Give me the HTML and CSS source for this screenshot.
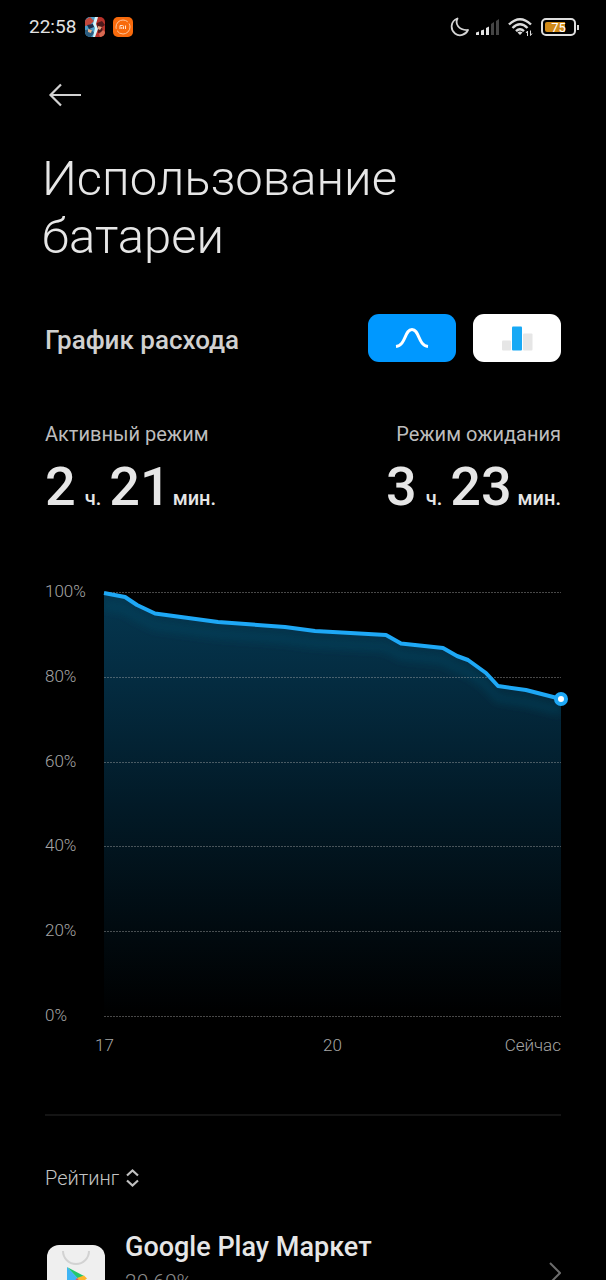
FILE: index.html
```
<!DOCTYPE html>
<html lang="ru">
<head>
	<meta charset="UTF-8">
	<meta name="viewport" content="width=device-width, initial-scale=1">
	<title>Использование батареи</title>
	<link rel="stylesheet" href="styles.css">
</head>
<body>
	<div class="screen">
		<!-- status bar -->
		<div class="status">
			<div class="status-left">
				<span class="clock">22:58</span>
				<svg width="20" height="20" viewBox="0 0 20 20">
					<defs><clipPath id="gameClip"><rect width="20" height="20" rx="5"/></clipPath></defs>
					<g clip-path="url(#gameClip)">
						<rect width="10" height="20" fill="#4c9cc8"/>
						<rect x="10" width="10" height="20" fill="#b8322a"/>
						<path d="M0 3l5-3 4 4-4 4-5 1z" fill="#c3473b"/>
						<path d="M2 8l6-1 1 3-5 2z" fill="#1c2c48"/>
						<path d="M0 13l6-1 3 4-3 4H0z" fill="#2a5c80"/>
						<path d="M3 12l4 1-1 3-3-1z" fill="#e6b48c"/>
						<path d="M12 6l5-2 3 4-3 2 1 5-5 1z" fill="#4e1a1c"/>
						<path d="M13 9l4 1-2 3-2-1z" fill="#e9a27c"/>
						<path d="M10 0h3l-2 7 2 5-3 8H8l2-9-2-4z" fill="#d8f6fb"/>
						<path d="M14 17l4-4 2 2v5h-5z" fill="#d86a52"/>
					</g>
				</svg>
				<svg class="mi" width="20" height="20" viewBox="0 0 20 20">
					<rect width="20" height="20" rx="5" fill="#f86a0c"/>
					<circle cx="10" cy="10" r="7" fill="none" stroke="#ffc49a" stroke-width="1" stroke-dasharray="18 2"/>
					<path d="M7 12V8.500h2.500q1 0 1 1V12M8.800 10v2M12.500 8.500V12" fill="none" stroke="#ffe3cf" stroke-width="1"/>
				</svg>
			</div>
			<div class="status-right">
				<svg width="20" height="20" viewBox="0 0 20 20">
					<path d="M7.500 1.500C5 6.500 8 13.500 18 13 15.500 18 9.500 20 5 16.500 0 12.500 0.500 4 7.500 1.500z" fill="none" stroke="#d4d4d4" stroke-width="1.800" stroke-linejoin="round"/>
				</svg>
				<svg class="signal" width="24" height="18" viewBox="0 0 24 18">
					<path d="M0 17v-2.500l3-1V17zM5 17v-4.500l3-1V17zM10 17v-7l3-1.500V17z" fill="#e4e4e4"/>
					<path d="M15 17V6l3-2v13zM20 17V3l3-2v16z" fill="#454545"/>
				</svg>
				<svg class="wifi" width="25" height="20" viewBox="0 0 25 20">
					<g fill="none" stroke="#dcdcdc" stroke-width="2.400">
						<path d="M1 7.500Q12 -3 23 7.500M4.500 11Q12 3.500 19.500 11M8 14.200Q12 10.200 16 14.200"/>
					</g>
					<path d="M9.500 15.500Q12 13.500 14.500 15.500L12 18z" fill="#dcdcdc"/>
					<path d="M19.500 19v-5l-1.500 2M22.500 13.500v5l1.500-2" fill="none" stroke="#dcdcdc" stroke-width="1"/>
				</svg>
				<span class="battery"><span class="battery-body"><span class="battery-text">75</span></span></span>
			</div>
		</div>

		<main class="content">
			<button class="back" type="button" aria-label="Назад">
				<svg width="34" height="24" viewBox="0 0 34 24">
					<path d="M33 12H3M13 1.500L2.500 12 13 22.500" fill="none" stroke="#d2d2d2" stroke-width="2.200"/>
				</svg>
			</button>

			<h1>Использование батареи</h1>

			<section class="mode">
				<h2>График расхода</h2>
				<div class="mode-buttons">
					<button class="mode-btn active" type="button" aria-label="Линейный график">
						<svg width="34" height="22" viewBox="0 0 34 22">
							<path d="M1 19.500C11 18.500 9.500 2.500 17 2.500S23 18.500 33 19.500" fill="none" stroke="#fff" stroke-width="3"/>
						</svg>
					</button>
					<button class="mode-btn" type="button" aria-label="Столбчатый график">
						<svg width="32" height="25" viewBox="0 0 32 25">
							<rect x="1" y="14.500" width="9" height="10" rx="1" fill="#e6e6e6"/>
							<rect x="22" y="7.500" width="9.500" height="17" rx="1" fill="#e6e6e6"/>
							<rect x="11" y="0.500" width="10" height="24" rx="1" fill="#18a9f5"/>
						</svg>
					</button>
				</div>
			</section>

			<section class="totals">
				<div>
					<p class="label">Активный режим</p>
					<p class="time"><b>2</b> <span class="hour">ч.</span> <b>21</b> <span class="minute">мин.</span></p>
				</div>
				<div class="right">
					<p class="label">Режим ожидания</p>
					<p class="time"><b>3</b> <span class="hour">ч.</span> <b>23</b> <span class="minute">мин.</span></p>
				</div>
			</section>

			<section class="chart">
				<div class="y-axis">
					<span>100%</span>
					<span>80%</span>
					<span>60%</span>
					<span>40%</span>
					<span>20%</span>
					<span>0%</span>
				</div>
				<div class="plot">
					<svg viewBox="0 0 457 425" preserveAspectRatio="none">
						<defs>
							<linearGradient id="area" x1="0" y1="0" x2="0" y2="1">
								<stop offset="0" stop-color="#053750"/>
								<stop offset="0.200" stop-color="#042c41"/>
								<stop offset="0.500" stop-color="#021a27"/>
								<stop offset="0.800" stop-color="#010a0f"/>
								<stop offset="1" stop-color="#000"/>
							</linearGradient>
							<clipPath id="areaClip">
								<path d="M0 1L21 5 33 13 51 21.500 114 30 181 35 211 39 282 43 297 51.500 339 56 353 64 364 68 382 81 394 94 422 98 457 107V425H0z"/>
							</clipPath>
							<filter id="soft" x="-10%" y="-20%" width="120%" height="140%"><feGaussianBlur stdDeviation="4"/></filter>
						</defs>
						<path d="M0 1L21 5 33 13 51 21.500 114 30 181 35 211 39 282 43 297 51.500 339 56 353 64 364 68 382 81 394 94 422 98 457 107V425H0z" fill="url(#area)"/>
						<g clip-path="url(#areaClip)">
							<path d="M0 13L21 17 33 25 51 33.500 114 42 181 47 211 51 282 55 297 63.500 339 68 353 76 364 80 382 93 394 106 422 110 457 119" fill="none" stroke="#0c4a66" stroke-opacity="0.500" stroke-width="7" filter="url(#soft)"/>
						</g>
						<g class="grid-lines">
							<path d="M0 0.500H457M0 85.500H457M0 170.500H457M0 254.500H457M0 339.500H457M0 424.500H457"/>
						</g>
						<path class="line" d="M0 1L21 5 33 13 51 21.500 114 30 181 35 211 39 282 43 297 51.500 339 56 353 64 364 68 382 81 394 94 422 98 457 107"/>
					</svg>
					<span class="dot"></span>
				</div>
				<div class="x-axis">
					<span>17</span>
					<span>20</span>
					<span>Сейчас</span>
				</div>
			</section>

			<section class="rating">
				<button class="sort" type="button">
					Рейтинг
					<svg width="13" height="18" viewBox="0 0 13 18">
						<path d="M1 6.500L6.500 1.500 12 6.500M1 11.500L6.500 16.500 12 11.500" fill="none" stroke="#c0c0c0" stroke-width="2.200"/>
					</svg>
				</button>
				<a class="app" href="#">
					<svg class="app-icon" width="58" height="58" viewBox="0 0 58 58">
						<rect width="58" height="58" rx="12" fill="#efefef"/>
						<path d="M16 6a13 13 0 0 0 26 0" fill="none" stroke="#d2d2d2" stroke-width="2"/>
						<path d="M20 22l17 9-5 4z" fill="#22c76c"/>
						<path d="M20 22l12 12.500-12 12.500z" fill="#3fb4f4"/>
						<path d="M30 33l7-2.500 3 3-6 4.500z" fill="#fdb52b"/>
						<path d="M20 47l10-14 4 5z" fill="#f0505c"/>
					</svg>
					<span class="app-text">
						<span class="app-name">Google Play Маркет</span>
						<span class="app-value">20.60%</span>
					</span>
					<svg class="chevron" width="14" height="22" viewBox="0 0 14 22">
						<path d="M3 1L13 11 3 21" fill="none" stroke="#6c6c6c" stroke-width="2"/>
					</svg>
				</a>
			</section>
		</main>
	</div>
</body>
</html>
```
FILE: styles.css
```
* {box-sizing: border-box;}
body {margin: 0; background: #000; color: #e6e6e6; font-family: Roboto, "Liberation Sans", sans-serif;}
h1, h2, p {margin: 0;}
button {border: 0; padding: 0; background: none; color: inherit; font: inherit; cursor: pointer;}
svg {display: block; flex: none;}

.screen {height: 100vh; overflow: hidden;}

/* status bar */
.status {display: flex; justify-content: space-between; align-items: center; height: 54px; padding: 0 27px 0 29px;}
.status-left, .status-right {display: flex; align-items: center;}
.clock {font-size: 19px; line-height: 24px; margin-right: 9px; color: #e2e2e2;}
.mi {margin-left: 8px;}
.signal {margin-left: 6px;}
.wifi {margin-left: 8px;}
.battery {display: flex; align-items: center; margin-left: 8px;}
.battery::after {content: ""; width: 2px; height: 5px; margin-left: 1px; background: #d8d8d8;}
.battery-body {width: 35px; height: 18px; border: 2px solid #dedede; border-radius: 5px; padding: 2px;}
.battery-text {display: block; height: 10px; border-radius: 2px; background: linear-gradient(90deg, #d08a18 75%, transparent 75%);
	font-size: 13px; line-height: 11px; text-align: center; color: #fff;}

.content {padding: 0 45px;}
.back {display: block; margin: 29px 0 0 3px;}

h1 {margin: 43px 0 0 -3px; font-size: 49px; line-height: 58px; font-weight: 300; max-width: 460px;}

.mode {display: flex; justify-content: space-between; align-items: center; margin-top: 48px;}
h2 {padding-top: 4px; font-size: 26px; line-height: 32px; font-weight: 500; color: #d0d0d0;}
.mode-buttons {display: flex; gap: 17px;}
.mode-btn {display: flex; justify-content: center; align-items: center; width: 88px; height: 48px; border-radius: 11px; background: #fff;}
.mode-btn.active {background: #0098ff;}

.totals {display: flex; justify-content: space-between; margin-top: 58px;}
.label {font-size: 20px; line-height: 28px; color: #bdbdbd;}
.time {display: flex; align-items: baseline; margin-top: 11px; font-size: 20px; line-height: 56px; font-weight: 500; white-space: nowrap;}
.time b {font-size: 54px; font-weight: 500;}
.hour {margin: 0 8px 0 9px;}
.minute {margin-left: 2px;}
.right {text-align: right;}
.right .time {justify-content: flex-end;}
.right .minute {margin-left: 6px;}

/* chart */
.chart {display: grid; grid-template-columns: 59px 1fr; margin-top: 66px; font-size: 17px; line-height: 22px; font-weight: 300; color: #a6a6a6;}
.y-axis {display: flex; flex-direction: column; justify-content: space-between; margin: -12px 0 -9px;}
.plot {position: relative; height: 425px;}
.plot svg {width: 100%; height: 100%; overflow: visible;}
.grid-lines path {fill: none; stroke: #b4b4b4; stroke-opacity: 0.400; stroke-width: 1; stroke-dasharray: 2 1;}
.line {fill: none; stroke: #1ea8f6; stroke-width: 4; stroke-linejoin: round; vector-effect: non-scaling-stroke;}
.dot {position: absolute; right: -7px; top: 100px; width: 14px; height: 14px; border: 4px solid #1ea8f6; border-radius: 50%; background: #fff;}
.x-axis {grid-column: 2; display: grid; grid-template-columns: 1fr 2fr 1fr; margin-top: 17px;}
.x-axis span:first-child {margin-left: -9px;}
.x-axis span:nth-child(2) {text-align: center;}
.x-axis span:last-child {text-align: right;}

/* rating list */
.rating {margin-top: 58px; padding-top: 48px; border-top: 2px solid #141414;}
.sort {display: flex; align-items: center; gap: 7px; font-size: 20px; line-height: 28px; font-weight: 300; color: #c4c4c4;}
.app {display: flex; align-items: flex-start; margin-top: 38px; color: inherit; text-decoration: none;}
.app-icon {margin: 15px 0 0 2px;}
.app-text {display: flex; flex-direction: column; flex: 1; margin-left: 20px;}
.app-name {font-size: 27px; line-height: 34px; font-weight: 500;}
.app-value {margin-top: 4px; font-size: 21px; line-height: 28px; font-weight: 300; color: #8c8c8c;}
.chevron {margin-top: 32px;}
```
